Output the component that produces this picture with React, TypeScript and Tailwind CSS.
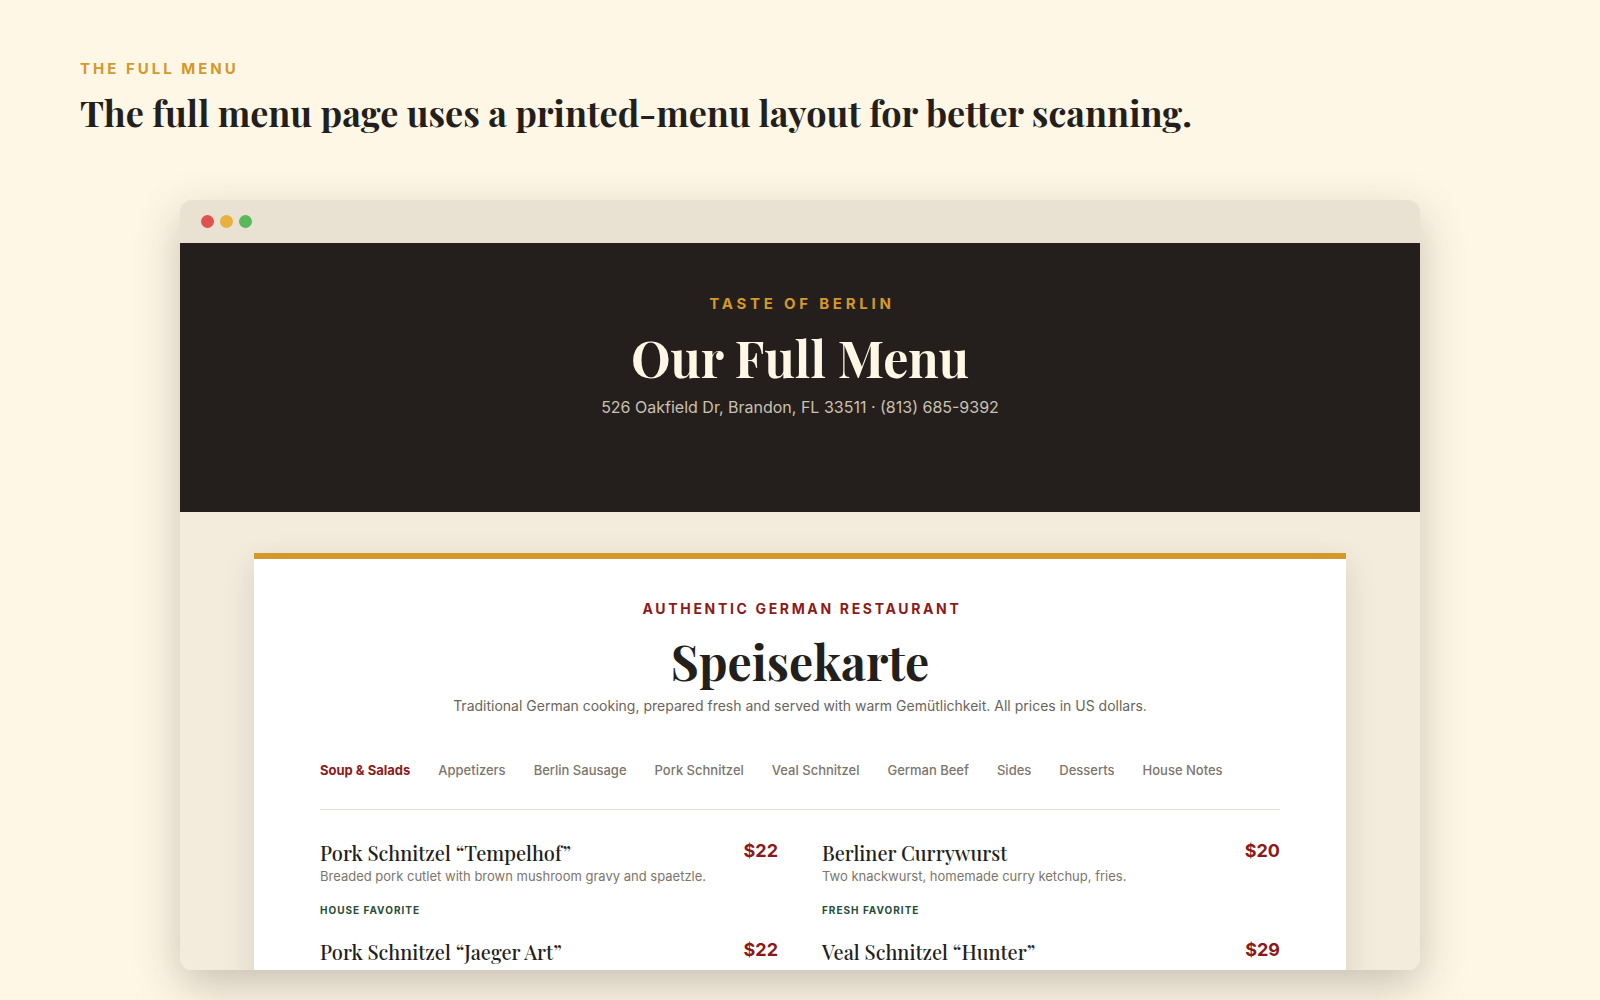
import React, { useState } from 'react';

const categories = [
  'Soup & Salads',
  'Appetizers',
  'Berlin Sausage',
  'Pork Schnitzel',
  'Veal Schnitzel',
  'German Beef',
  'Sides',
  'Desserts',
  'House Notes',
];

const dishes = [
  {
    name: 'Pork Schnitzel “Tempelhof”',
    description: 'Breaded pork cutlet with brown mushroom gravy and spaetzle.',
    tag: 'House Favorite',
    price: '$22',
  },
  {
    name: 'Berliner Currywurst',
    description: 'Two knackwurst, homemade curry ketchup, fries.',
    tag: 'Fresh Favorite',
    price: '$20',
  },
  { name: 'Pork Schnitzel “Jaeger Art”', price: '$22' },
  { name: 'Veal Schnitzel “Hunter”', price: '$29' },
];

const MenuItem: React.FC<{ dish: (typeof dishes)[number] }> = ({ dish }) => (
  <article className="flex items-start justify-between gap-4">
    <div>
      <h3 className="font-['Playfair_Display','Liberation_Serif',serif] text-xl leading-7 font-medium text-[#231f1c] [font-variant-ligatures:none]">
        {dish.name}
      </h3>
      {dish.description && <p className="text-[13px] leading-[18px] text-[#7c756b]">{dish.description}</p>}
      {dish.tag && (
        <p className="mt-[17px] text-[10px] leading-4 font-bold tracking-[1px] uppercase text-[#254d35]">{dish.tag}</p>
      )}
    </div>
    <span className="text-lg leading-6 font-bold text-[#8b1a1a]">{dish.price}</span>
  </article>
);

const MenuCard: React.FC = () => {
  const [active, setActive] = useState(categories[0]);

  return (
    <section className="border-t-6 border-[#d4982b] bg-white px-[66px] pt-10 pb-16 shadow-[0_10px_30px_rgba(36,31,28,0.12)]">
      <header className="flex flex-col items-center text-center">
        <p className="pl-1 text-sm leading-5 font-bold tracking-[0.19em] uppercase text-[#8b1a1a]">
          Authentic German Restaurant
        </p>
        <h2 className="mt-2.5 font-['Playfair_Display','Liberation_Serif',serif] text-5xl leading-[64px] font-bold text-[#231f1c] [font-variant-ligatures:none]">
          Speisekarte
        </h2>
        <p className="mt-px text-sm leading-6 text-[#6b645b]">
          Traditional German cooking, prepared fresh and served with warm Gemütlichkeit. All prices in US dollars.
        </p>
      </header>

      {/* Category links */}
      <nav className="mt-[42px] flex gap-7 border-b border-[#e5e0d5] pb-[29px] text-[13px] leading-5">
        {categories.map((category) => (
          <a
            key={category}
            href="#"
            onClick={() => setActive(category)}
            className={
              active === category
                ? 'font-bold whitespace-nowrap text-[#8b1a1a]'
                : 'font-medium whitespace-nowrap text-[#7c756b]'
            }
          >
            {category}
          </a>
        ))}
      </nav>

      <div className="mt-[29px] grid grid-cols-2 gap-x-11 gap-y-5">
        {dishes.map((dish) => (
          <MenuItem key={dish.name} dish={dish} />
        ))}
      </div>
    </section>
  );
};

export default function App() {
  return (
    <main className="flex h-screen flex-col overflow-hidden bg-[#fff7e6] pt-[58px] pb-[30px] font-[Inter,sans-serif]">
      <header className="px-20">
        <p className="text-[15px] leading-[22px] font-bold tracking-[3px] uppercase text-[#d4982b]">The Full Menu</p>
        <h1 className="mt-2 font-['Playfair_Display','Liberation_Serif',serif] text-4xl leading-[48px] font-bold text-[#231f1c]">
          The full menu page uses a printed-menu layout for better scanning.
        </h1>
      </header>

      {/* Browser window */}
      <div className="mx-[180px] mt-16 flex min-h-0 flex-1 flex-col rounded-xl shadow-[0_16px_45px_rgba(36,31,28,0.25)]">
        <div className="flex min-h-0 flex-1 flex-col overflow-hidden rounded-xl bg-[#f3ecdc]">
          <div className="flex h-[43px] shrink-0 items-center gap-1.5 bg-[#e9e2d2] px-[21px]">
            <span className="size-[13px] rounded-full bg-[#e0524d]" />
            <span className="size-[13px] rounded-full bg-[#e6b13e]" />
            <span className="size-[13px] rounded-full bg-[#59b85a]" />
          </div>

          <div className="flex shrink-0 flex-col items-center bg-[#241f1c] pt-[51px] pb-[93px] text-center">
            <p className="pl-1 text-[15px] leading-5 font-bold tracking-[0.25em] uppercase text-[#d4982b]">
              Taste of Berlin
            </p>
            <h2 className="mt-3 font-['Playfair_Display','Liberation_Serif',serif] text-[50px] leading-[64px] font-bold text-[#fff7e6]">
              Our Full Menu
            </h2>
            <p className="mt-[5px] text-base leading-6 text-[#c9c1b2]">
              526 Oakfield Dr, Brandon, FL 33511 · (813) 685-9392
            </p>
          </div>

          <div className="shrink-0 px-[74px] pt-[41px]">
            <MenuCard />
          </div>
        </div>
      </div>
    </main>
  );
}
